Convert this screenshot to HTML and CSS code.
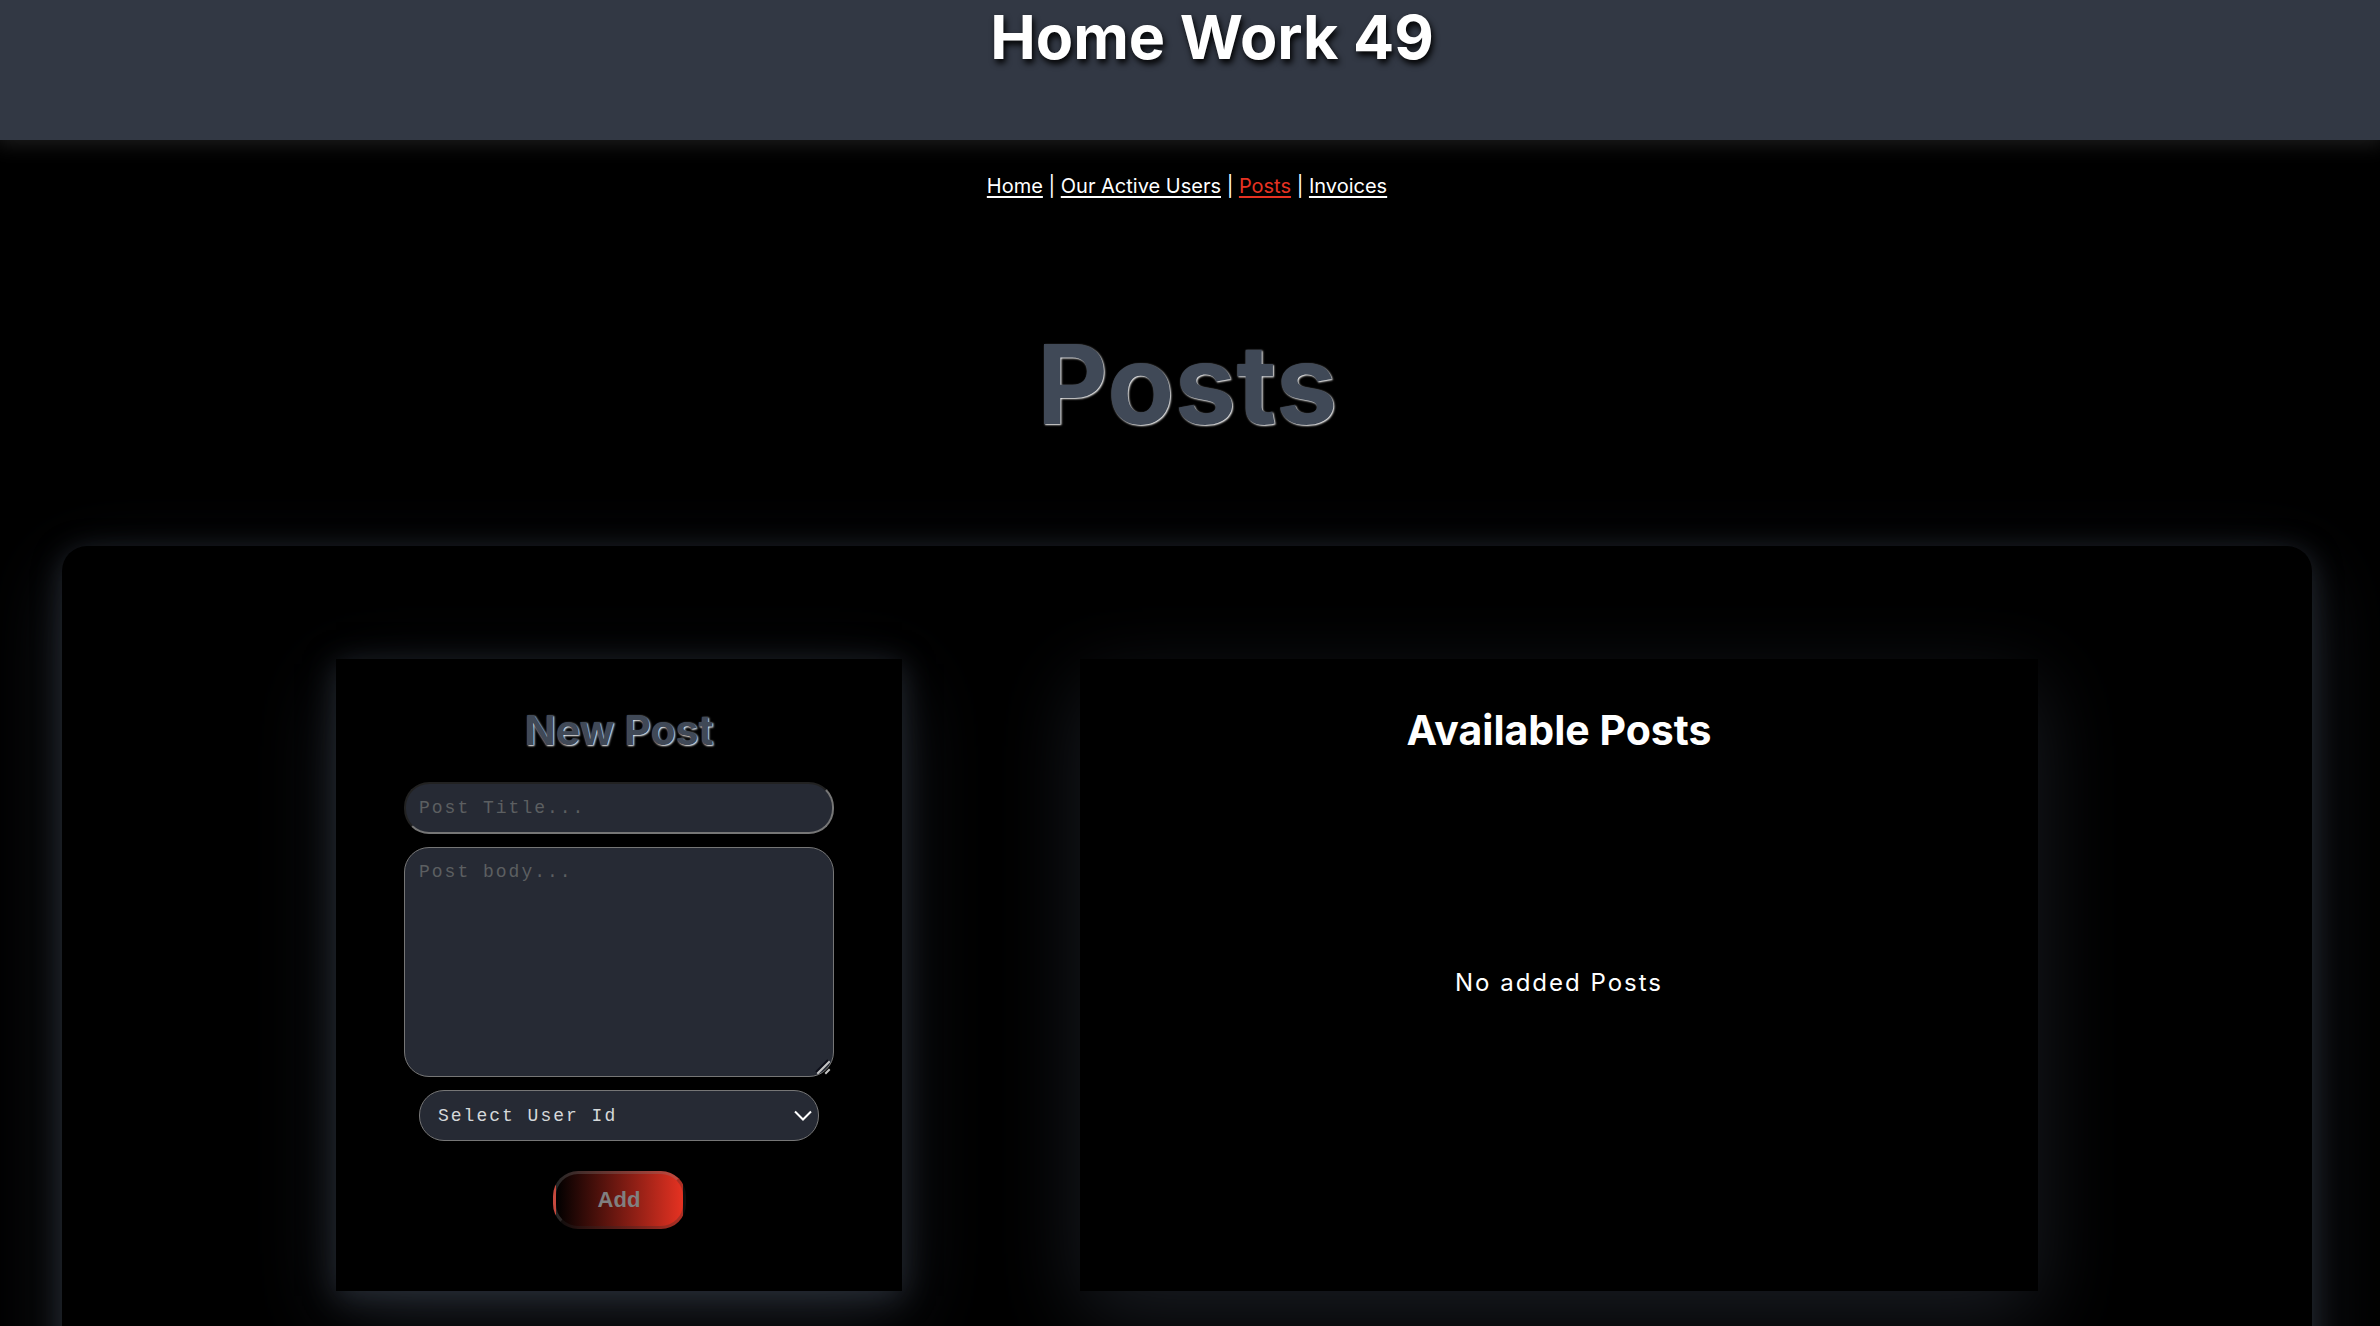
FILE: index.html
```html
<!DOCTYPE html>
<html lang="en">
<head>
  <meta charset="utf-8">
  <meta name="viewport" content="width=device-width, initial-scale=1">
  <title>Home Work 49</title>
  <link rel="stylesheet" href="styles.css">
</head>
<body>
  <header class="site-header">
    <h1 class="site-title">Home Work 49</h1>
  </header>
  <main class="page">
    <nav class="site-nav">
      <a class="nav-link" href="#home">Home</a> |
      <a class="nav-link" href="#users">Our Active Users</a> |
      <a class="nav-link nav-link-active" href="#posts">Posts</a> |
      <a class="nav-link" href="#invoices">Invoices</a>
    </nav>
    <h2 class="page-title">Posts</h2>
    <section class="board">
      <form class="card card-form">
        <h3 class="card-title card-title-slate">New Post</h3>
        <input class="field field-title" type="text" placeholder="Post Title..." aria-label="Post title">
        <div class="body-wrap">
          <textarea class="field field-body" placeholder="Post body..." aria-label="Post body"></textarea>
          <svg class="grip" width="16" height="16" viewBox="0 0 16 16" aria-hidden="true">
            <path d="M1 13 13 1" stroke="#0c0d18" stroke-width="2"/>
            <path d="M3 14 14 3M11 14l3-3" stroke="#c4c4c4" stroke-width="2" stroke-linecap="square"/>
          </svg>
        </div>
        <div class="select-wrap">
          <select class="field field-user" aria-label="User id">
            <option>Select User Id</option>
          </select>
          <svg class="chevron" width="18" height="12" viewBox="0 0 18 12" aria-hidden="true">
            <path d="M1 1.500 9 9.500 17 1.500" fill="none" stroke="#fff" stroke-width="2"/>
          </svg>
        </div>
        <button class="add-button" type="submit" disabled>Add</button>
      </form>
      <section class="card card-list">
        <h3 class="card-title">Available Posts</h3>
        <p class="empty">No added Posts</p>
      </section>
    </section>
  </main>
</body>
</html>
```
FILE: styles.css
```css
* {
  box-sizing: border-box;
}

body {
  margin: 0;
  min-height: 100vh;
  background: #000;
  color: #fff;
  font-family: Inter, "Liberation Sans", sans-serif;
}

.site-header {
  height: 140px;
  padding-left: 44px;
  background: #323844;
  box-shadow: 0 0 20px 4px rgba(255, 255, 255, 0.12);
  text-align: center;
}

.site-title {
  margin: 0;
  font-size: 61px;
  line-height: 74px;
  text-shadow: 2px 4px 6px #000;
}

.page {
  padding: 32px 68px 60px 62px;
}

.site-nav {
  font-size: 20px;
  line-height: 28px;
  text-align: center;
}

.nav-link {
  color: #fff;
  text-underline-offset: 3px;
  text-decoration-thickness: 2px;
}

.nav-link-active {
  color: #e63222;
}

.page-title {
  margin: 114px 0 92px;
  color: #404957;
  font-size: 110px;
  line-height: 140px;
  text-align: center;
  text-shadow: 1px 1px 2px #fff;
}

.board {
  display: grid;
  grid-template-columns: 566fr 958fr;
  gap: 178px;
  padding: 113px 274px;
  border-radius: 25px;
  background: #000;
  box-shadow: 0 5px 28px rgba(64, 73, 87, 0.5), 0 25px 80px rgba(64, 73, 87, 0.4);
}

.card {
  display: flex;
  flex-direction: column;
  align-items: center;
  min-height: 632px;
  padding: 46px 68px 62px;
  background: #000;
}

.card-form {
  box-shadow: 0 5px 28px rgba(64, 73, 87, 0.5), 0 25px 80px rgba(64, 73, 87, 0.4);
}

.card-list {
  box-shadow: 0 25px 80px rgba(64, 73, 87, 0.4);
}

.card-title {
  margin: 0 0 27px;
  font-size: 41px;
  line-height: 50px;
}

.card-title-slate {
  color: #404957;
  text-shadow: 1px 1px 2px #fff;
}

.field {
  display: block;
  width: 100%;
  border: 1px solid #767676;
  border-radius: 25px;
  background: #262a34;
  color: #d5d8da;
  font-family: "Courier New", "Liberation Mono", monospace;
  font-size: 18px;
  letter-spacing: 2px;
}

.field::placeholder {
  color: #5c5f61;
}

.field-title {
  height: 52px;
  padding: 0 13px;
  border: 2px solid;
  border-color: #222 #767676 #767676 #222;
}

.body-wrap {
  position: relative;
  width: 100%;
  margin: 13px 0;
}

.field-body {
  height: 230px;
  padding: 14px;
  resize: none;
}

.grip {
  position: absolute;
  right: 3px;
  bottom: 2px;
}

.select-wrap {
  position: relative;
  width: 400px;
  max-width: 100%;
}

.field-user {
  height: 51px;
  padding: 0 18px;
  appearance: none;
}

.chevron {
  position: absolute;
  top: 20px;
  right: 7px;
  pointer-events: none;
}

.add-button {
  width: 133px;
  height: 58px;
  margin-top: 30px;
  border: 3px outset rgba(128, 128, 128, 0.3);
  border-radius: 25px;
  background: linear-gradient(to right, #000, #e63222);
  color: #808080;
  font-family: "Liberation Sans", sans-serif;
  font-size: 22px;
  font-weight: 700;
}

.empty {
  margin: 171px 0 0;
  font-size: 24px;
  line-height: 60px;
  letter-spacing: 2px;
}
```
